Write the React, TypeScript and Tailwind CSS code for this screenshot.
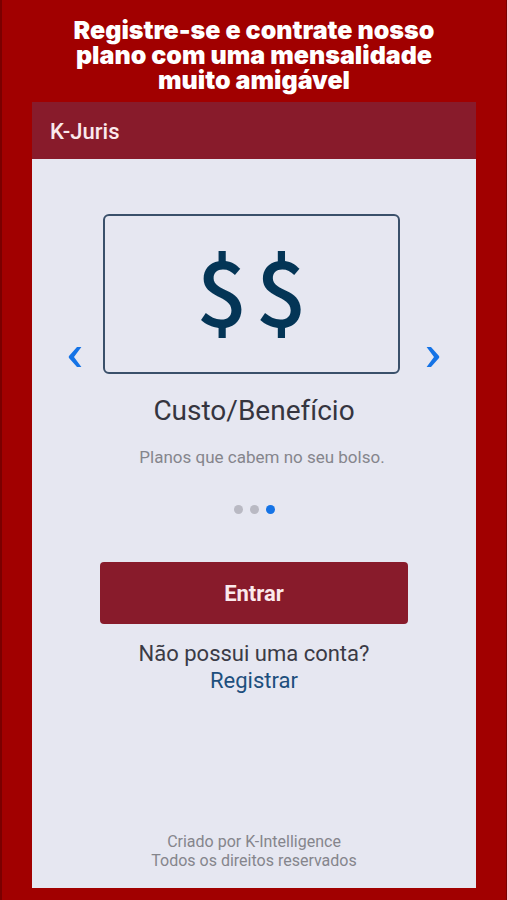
import { useState } from "react";

const slides = [
  { id: 0, label: "Slide 1" },
  { id: 1, label: "Slide 2" },
  { id: 2, label: "Slide 3" },
];

function Arrow({ flipped = false }: { flipped?: boolean }) {
  return (
    <svg viewBox="0 0 14 22" className={flipped ? "h-[22px] w-full rotate-180" : "h-[22px] w-full"} aria-hidden="true">
      <path d="M9 1H13.4L6 11L13.4 21H9L1 12Q.4 11 1 10Z" fill="#1573e6" />
    </svg>
  );
}

export default function App() {
  const [active, setActive] = useState(2);
  const last = slides.length - 1;

  return (
    <div className="flex min-h-screen flex-col border-l-2 border-r border-[#7a0000] bg-[#a10000] px-[30px] pb-3 pt-[18px] font-['Roboto',sans-serif]">
      <h1 className="mx-auto max-w-96 pb-[9px] text-center font-['Inter',sans-serif] text-[25px] font-black leading-[25px] text-white">
        Registre-se e contrate nosso plano com uma mensalidade muito amigável
      </h1>

      <main className="flex flex-1 flex-col bg-[#e6e7f1]">
        <header className="flex h-[57px] items-center bg-[#881b2b] px-[18px]">
          <h2 className="pt-[2px] text-[22px] font-medium text-[#fbe9ec]">K-Juris</h2>
        </header>

        {/* Carousel */}
        <section className="pt-[55px]" aria-label="Vantagens">
          <div className="flex items-center px-9">
            <button type="button" aria-label="Anterior" className="w-[14px]" onClick={() => setActive(Math.max(0, active - 1))}>
              <Arrow />
            </button>
            <div className="flex-1">
              <div className="ml-[21px] mr-[26px] flex h-40 items-center justify-center gap-2 rounded-md border-2 border-[#3a506a] pb-3 font-['Noto_Sans_CJK_JP',sans-serif] text-[90px] font-medium leading-none text-[#043556]">
                <span>$</span>
                <span>$</span>
              </div>
              <h3 className="mt-[21px] text-center text-[28px] leading-8 text-[#35353f]">Custo/Benefício</h3>
              <p className="mt-[18px] pb-[30px] pl-4 text-center text-[17px] leading-6 text-[#85858c]">
                Planos que cabem no seu bolso.
              </p>
            </div>
            <button type="button" aria-label="Próximo" className="w-[14px]" onClick={() => setActive(Math.min(last, active + 1))}>
              <Arrow flipped />
            </button>
          </div>
          <div className="mt-[6px] flex justify-center gap-[7px]">
            {slides.map((slide) => (
              <button
                key={slide.id}
                type="button"
                aria-label={slide.label}
                onClick={() => setActive(slide.id)}
                className={slide.id === active ? "size-[9px] rounded-full bg-[#1573e6]" : "size-[9px] rounded-full bg-[#b9b9c3]"}
              />
            ))}
          </div>
        </section>

        {/* Login */}
        <section className="mt-12 px-[68px] text-center">
          <button type="button" className="h-[62px] w-full rounded-[4px] bg-[#881b2b] text-[22px] font-bold text-[#fbe9ec]">
            Entrar
          </button>
          <p className="mt-4 whitespace-nowrap text-[22px] leading-[27px] text-[#3b3b46]">Não possui uma conta?</p>
          <a href="#registrar" className="text-[22px] leading-[27px] text-[#1d4f7d]">
            Registrar
          </a>
        </section>

        <footer className="mt-auto pb-[18px] text-center text-[16px] leading-[19px] text-[#85858c]">
          <p>Criado por K-Intelligence</p>
          <p>Todos os direitos reservados</p>
        </footer>
      </main>
    </div>
  );
}
